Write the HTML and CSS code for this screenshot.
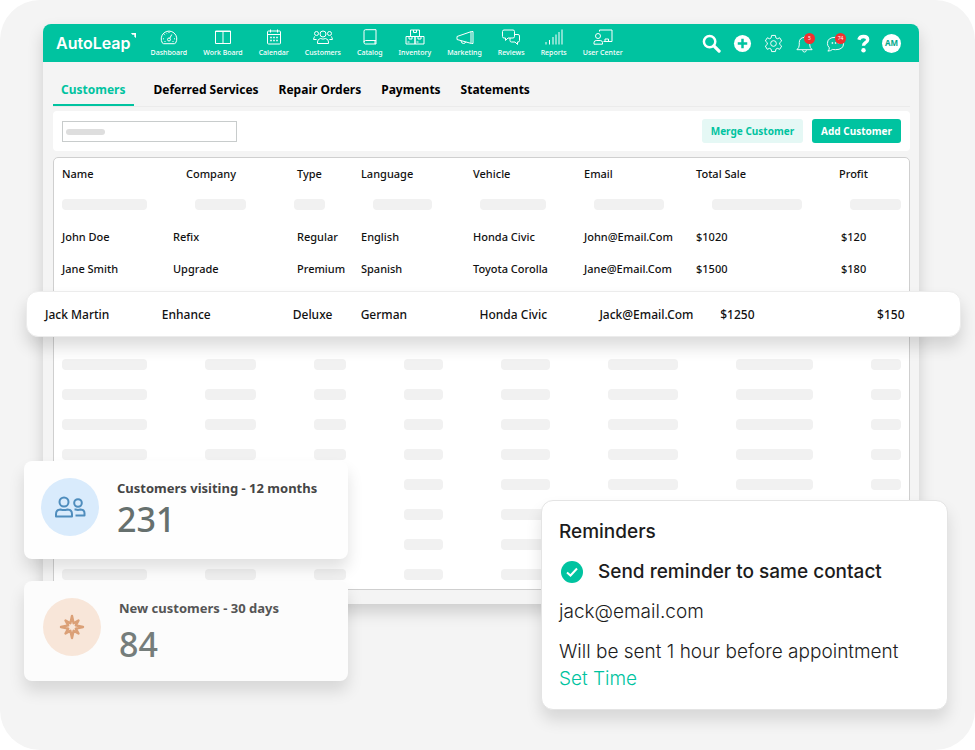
FILE: index.html
```html
<!DOCTYPE html>
<html lang="en">
<head>
  <meta charset="UTF-8">
  <meta name="viewport" content="width=device-width, initial-scale=1">
  <title>AutoLeap - Customers</title>
  <link rel="stylesheet" href="styles.css">
</head>
<body>
  <main class="stage">

    <div class="window">
      <header class="navbar">
        <a href="#" class="logo">AutoLeap<svg class="logo-mark" viewBox="0 0 6 6"><path d="M0 0h6v6L4 4.500V2H1.500z" fill="#fff"/></svg></a>

        <nav class="menu">
          <a href="#">
            <svg viewBox="0 0 20 16"><path d="M3.500 14.200A7.800 7.800 0 1 1 16.500 14.200Q16 14.700 15.300 14.700H4.700Q4 14.700 3.500 14.200z"/><circle cx="10" cy="10.500" r="1.500"/><path d="M10.800 9.200l2-3.700M10 3v1M5.400 5.400l.7.600M4 9.800h1M15 9.800h1M7.500 3.800l.3.700M5.500 12.500h1M13.500 12.500h1"/></svg>
            Dashboard
          </a>
          <a href="#">
            <svg viewBox="0 0 20 16"><path d="M2.500 2h15v12.500h-15zM10 2v12.500M2.500 2.500h15"/></svg>
            Work Board
          </a>
          <a href="#">
            <svg viewBox="0 0 20 16"><rect x="3.500" y="2" width="13" height="13" rx="1"/><path d="M3.500 5.500h13M6.500 .5v3M13.500 .5v3"/><path d="M6.200 8.500h1.600M9.200 8.500h1.600M12.200 8.500h1.600M6.200 11.500h1.600M9.200 11.500h1.600M12.200 11.500h1.600" stroke-width="1.600"/></svg>
            Calendar
          </a>
          <a href="#">
            <svg viewBox="0 0 20 16"><circle cx="10" cy="5" r="3"/><path d="M4.500 14.500v-1.500q0-3 3-3.500 2.500 1.300 5 0 3 .5 3 3.500v1.500z"/><circle cx="3.500" cy="4.500" r="2"/><circle cx="16.500" cy="4.500" r="2"/><path d="M2 7.500Q.6 8 .6 10.500h3M18 7.500q1.400.5 1.400 3h-3"/></svg>
            Customers
          </a>
          <a href="#">
            <svg viewBox="0 0 20 16"><path d="M16 11.500H5.500a1.500 1.700 0 0 0 0 3.500H16V.7H5.500Q4 .7 4 2.200v11M15 11.500V15"/></svg>
            Catalog
          </a>
          <a href="#">
            <svg viewBox="0 0 20 16"><path d="M5.500 1h9v6.500h-9zM1 7.500h9V15H1zM10 7.500h9V15h-9zM8.500 1v2.500h3V1M4 7.500V10h3V7.500M13 7.500V10h3V7.500M2.500 13h2M11.500 13h2"/></svg>
            Inventory
          </a>
          <a href="#">
            <svg viewBox="0 0 20 16"><path d="M2 7.500L16.500 2.500h1.500v12h-1.500L2 10.500zM16 2.700v11.500M6 11.800q.3 2.700 2.500 2.700 1.800 0 2.300-1.700"/></svg>
            Marketing
          </a>
          <a href="#">
            <svg viewBox="0 0 20 16"><path d="M3 1h9q1.500 0 1.500 1.500v5Q13.500 9 12 9H7l-2.500 2.500V9H3Q1.500 9 1.500 7.500v-5Q1.500 1 3 1z"/><path d="M13.500 5.500H17q1.500 0 1.500 1.500v4.500q0 1.500-1.500 1.500h-.5v2.500L14 13h-3.500Q9 13 9 11.500V9"/></svg>
            Reviews
          </a>
          <a href="#">
            <svg viewBox="0 0 20 16"><path d="M2 13v2.500M5.500 11v4.500M9 8v7.500M12 5.500v10M15 3v12.500M18 .5v15"/></svg>
            Reports
          </a>
          <a href="#">
            <svg viewBox="0 0 20 16"><path d="M6.500 2.500V1H19v11.500h-8.500M12 12.500V10h3.500v2.500"/><circle cx="5" cy="7" r="2.500"/><path d="M1 15.200v-1.500q0-2.200 2.200-2.200h4q2.300 0 2.300 2.200v1.500z"/></svg>
            User Center
          </a>
        </nav>

        <div class="actions">
          <button class="icon-button" aria-label="Search">
            <svg viewBox="0 0 20 20"><circle cx="8" cy="8" r="6" stroke-width="2.600"/><path d="M12.500 12.500l5.500 5.500" stroke-width="3.400" stroke-linecap="round"/></svg>
          </button>
          <button class="icon-button" aria-label="Add">
            <svg viewBox="0 0 20 20"><circle cx="10" cy="10" r="9" fill="#fff" stroke="none"/><path d="M10 5v10M5 10h10" stroke="#00c3a0" stroke-width="2.600"/></svg>
          </button>
          <button class="icon-button" aria-label="Settings">
            <svg viewBox="0 0 20 20"><path d="M8 1.500h4l.5 2.600 1.500.9 2.600-1 2 3.400-2.100 1.800v1.700l2.100 1.800-2 3.400-2.600-1-1.500.9-.5 2.500H8l-.5-2.500-1.500-.9-2.600 1-2-3.400 2.100-1.800V9.200L1.400 7.400l2-3.400L6 5l1.500-.9z" stroke-linejoin="round"/><circle cx="10" cy="10" r="3"/></svg>
          </button>
          <button class="icon-button" aria-label="Notifications">
            <svg viewBox="0 0 20 20"><path d="M2 16.500q2.500-2 2.500-5V9q0-5 5.500-5.500 5.500.5 5.500 5.500v2.500q0 3 2.500 5zM10 3.500V2M8 17q.3 2 2 2t2-2" stroke-linejoin="round"/></svg>
            <span class="badge">5</span>
          </button>
          <button class="icon-button" aria-label="Messages">
            <svg viewBox="0 0 20 20"><path d="M3.500 14.500Q1.500 12.500 1.500 10 1.500 3.500 10 3.500T18.500 10 10 16.500q-1.800 0-3-.3-2 1.700-5 1.800 1.700-1.800 1.500-3.500z" stroke-linejoin="round"/><path d="M6 9.500h1.500M9.300 9.500h1.500M12.500 9.500H14" stroke-width="1.500"/></svg>
            <span class="badge">74</span>
          </button>
          <button class="icon-button help" aria-label="Help">
            <svg viewBox="0 0 14 20"><path d="M2 6Q3 2.500 7 2.500q4.500 0 4.500 3.500 0 1.800-2.500 3.200-2 1.100-2 3.300" stroke-width="3.600"/><circle cx="7" cy="17.200" r="2.400" fill="#fff" stroke="none"/></svg>
          </button>
          <button class="avatar">AM</button>
        </div>
      </header>

      <section class="content">
        <nav class="tabs">
          <a href="#" class="active">Customers</a>
          <a href="#">Deferred Services</a>
          <a href="#">Repair Orders</a>
          <a href="#">Payments</a>
          <a href="#">Statements</a>
        </nav>

        <div class="toolbar">
          <div class="search">
            <input type="text" aria-label="Search customers">
            <span class="search-hint"></span>
          </div>
          <button class="btn btn-light">Merge Customer</button>
          <button class="btn btn-primary">Add Customer</button>
        </div>

        <table class="customers">
          <thead>
            <tr class="head">
              <th>Name</th><th>Company</th><th>Type</th><th>Language</th><th>Vehicle</th><th>Email</th><th>Total Sale</th><th>Profit</th>
            </tr>
          </thead>
          <tbody>
            <tr class="loading-top"><td></td><td></td><td></td><td></td><td></td><td></td><td></td><td></td></tr>
            <tr class="person">
              <td>John Doe</td><td>Refix</td><td>Regular</td><td>English</td><td>Honda Civic</td><td>John@Email.Com</td><td>$1020</td><td>$120</td>
            </tr>
            <tr class="person">
              <td>Jane Smith</td><td>Upgrade</td><td>Premium</td><td>Spanish</td><td>Toyota Corolla</td><td>Jane@Email.Com</td><td>$1500</td><td>$180</td>
            </tr>
            <tr class="selected">
              <td>Jack Martin</td><td>Enhance</td><td>Deluxe</td><td>German</td><td>Honda Civic</td><td>Jack@Email.Com</td><td>$1250</td><td>$150</td>
            </tr>
            <tr class="loading"><td></td><td></td><td></td><td></td><td></td><td></td><td></td><td></td></tr>
            <tr class="loading"><td></td><td></td><td></td><td></td><td></td><td></td><td></td><td></td></tr>
            <tr class="loading"><td></td><td></td><td></td><td></td><td></td><td></td><td></td><td></td></tr>
            <tr class="loading"><td></td><td></td><td></td><td></td><td></td><td></td><td></td><td></td></tr>
            <tr class="loading"><td></td><td></td><td></td><td></td><td></td><td></td><td></td><td></td></tr>
            <tr class="loading"><td></td><td></td><td></td><td></td><td></td><td></td><td></td><td></td></tr>
            <tr class="loading"><td></td><td></td><td></td><td></td><td></td><td></td><td></td><td></td></tr>
            <tr class="loading"><td></td><td></td><td></td><td></td><td></td><td></td><td></td><td></td></tr>
          </tbody>
        </table>
      </section>
    </div>

    <!-- Floating stats -->
    <aside class="stats">
      <div class="stat">
        <div class="stat-icon blue">
          <svg viewBox="0 0 32 24"><circle cx="10" cy="7" r="4.500"/><path d="M2 21.500v-2.300Q2 14.500 6.500 14.500q3.500 1.200 7 0 4.500 0 4.500 4.700v2.300z" stroke-linejoin="round"/><circle cx="24" cy="8" r="3.800"/><path d="M20.500 14.500h1q2.500.8 5 0 4 0 4 3.800v2.200h-9" stroke-linejoin="round"/></svg>
        </div>
        <div>
          <h3>Customers visiting - 12 months</h3>
          <p>231</p>
        </div>
      </div>
      <div class="stat stat-new">
        <div class="stat-icon orange">
          <svg viewBox="0 0 26 26"><path d="M13 2l1.600 7.200 4.900-2.700-2.700 4.900L24 13l-7.200 1.600 2.700 4.900-4.900-2.700L13 24l-1.600-7.200-4.900 2.700 2.700-4.900L2 13l7.200-1.600-2.700-4.900 4.900 2.700z" stroke-linejoin="round"/></svg>
        </div>
        <div>
          <h3>New customers - 30 days</h3>
          <p>84</p>
        </div>
      </div>
    </aside>

    <!-- Reminder card -->
    <aside class="reminders">
      <h2>Reminders</h2>
      <label class="check">
        <input type="checkbox" checked>
        <svg viewBox="0 0 22 22"><path d="M6 11.500l3.500 3 6.500-7"/></svg>
        Send reminder to same contact
      </label>
      <p class="email">jack@email.com</p>
      <p>Will be sent 1 hour before appointment</p>
      <a href="#">Set Time</a>
    </aside>

  </main>
</body>
</html>
```

FILE: styles.css
```css
* {
  box-sizing: border-box;
}

body {
  margin: 0;
  background: #fff;
  font-family: "Noto Sans", "Open Sans", sans-serif;
  color: #111;
}

a {
  color: inherit;
  text-decoration: none;
}

button {
  border: none;
  padding: 0;
  font-family: inherit;
  cursor: pointer;
}

h2, h3, p {
  margin: 0;
}

.stage {
  position: relative;
  min-height: 750px;
  padding: 24px 56px 24px 43px;
  background: #f4f4f4;
  border-radius: 40px;
  overflow: hidden;
}

.window {
  background: #f4f4f4;
  border-radius: 8px;
  box-shadow: 0 8px 16px rgba(0, 0, 0, 0.16);
}

/* Top bar */
.navbar {
  display: flex;
  align-items: center;
  height: 38px;
  padding: 0 18px 0 13px;
  background: #00c3a0;
  color: #fff;
  border-radius: 8px 8px 0 0;
}

.logo {
  display: flex;
  font-family: Inter, sans-serif;
  font-size: 16px;
  font-weight: 600;
  line-height: 20px;
  margin-right: 15px;
}

.logo-mark {
  width: 5px;
  height: 5px;
}

.menu {
  display: flex;
  gap: 16px;
}

.menu a {
  display: flex;
  flex-direction: column;
  align-items: center;
  gap: 3px;
  font-size: 7px;
  font-weight: 500;
  line-height: 10px;
  white-space: nowrap;
}

.menu svg {
  width: 20px;
  height: 16px;
}

.navbar svg {
  display: block;
  fill: none;
  stroke: #fff;
  stroke-width: 1;
}

.navbar .logo-mark {
  stroke: none;
}

.actions {
  display: flex;
  align-items: center;
  gap: 12px;
  margin-left: auto;
}

.icon-button {
  position: relative;
  width: 19px;
  height: 19px;
  background: none;
}

.icon-button svg {
  width: 100%;
  height: 100%;
}

.help {
  width: 13px;
}

.badge {
  position: absolute;
  top: -1px;
  right: -1px;
  width: 11px;
  height: 11px;
  border-radius: 50%;
  background: #f03030;
  color: #fff;
  font-size: 5px;
  line-height: 10px;
  text-align: center;
}

.avatar {
  width: 19px;
  height: 19px;
  border-radius: 50%;
  background: #fff;
  color: #00a98b;
  font-size: 8px;
  font-weight: 700;
  line-height: 16px;
}

/* Page content */
.content {
  padding: 0 9px 14px 10px;
}

.tabs {
  display: flex;
  gap: 20px;
  height: 45px;
  border-bottom: 1px solid #ebebeb;
  font-size: 12px;
  font-weight: 700;
  color: #000;
}

.tabs a {
  height: 44px;
  padding-top: 19px;
  line-height: 18px;
  white-space: nowrap;
}

.tabs .active {
  padding: 19px 8px 0;
  border-bottom: 2px solid #00c3a0;
  color: #00c3a0;
}

.toolbar {
  display: flex;
  align-items: center;
  gap: 9px;
  height: 40px;
  margin: 4px 0 6px;
  padding: 0 9px;
  background: #fff;
  border-radius: 4px;
}

.search {
  position: relative;
  margin-right: auto;
}

.search input {
  display: block;
  width: 175px;
  height: 21px;
  border: 1px solid #c8cccc;
  padding: 0 6px;
}

.search-hint {
  position: absolute;
  top: 8px;
  left: 4px;
  width: 39px;
  height: 6px;
  border-radius: 3px;
  background: #dedede;
}

.btn {
  height: 24px;
  padding: 0 9px;
  border-radius: 3px;
  font-size: 10px;
  font-weight: 700;
}

.btn-light {
  background: #e5f8f5;
  color: #00c3a0;
}

.btn-primary {
  background: #00c3a0;
  color: #fff;
}

/* Customers table */
.customers {
  display: block;
  background: #fff;
  border: 1px solid #cfcfcf;
  border-radius: 5px;
  font-size: 11px;
  font-weight: 500;
}

.customers thead,
.customers tbody {
  display: block;
}

.customers tr {
  display: grid;
  align-items: center;
  padding: 0 8px;
  white-space: nowrap;
}

.customers th,
.customers td {
  padding: 0;
  font-weight: inherit;
  text-align: left;
}

.customers .head {
  height: 31px;
  grid-template-columns: 124fr 111fr 64fr 112fr 111fr 112fr 143fr 62fr;
}

.customers .person {
  height: 32px;
  grid-template-columns: 111fr 124fr 64fr 112fr 111fr 112fr 145fr 60fr;
}

.customers .selected {
  position: relative;
  height: 46px;
  margin: 7px -52px 12px -28px;
  padding: 0 18px;
  grid-template-columns: 117fr 131fr 68fr 119fr 120fr 121fr 157fr 65fr;
  background: #fff;
  border: 1px solid #ececec;
  border-radius: 12px;
  box-shadow: 0 10px 16px rgba(0, 0, 0, 0.14);
  font-size: 12px;
}

/* Placeholder rows */
.loading-top td,
.loading td {
  height: 11px;
  border-radius: 4px;
  background: #f1f1f1;
}

.customers .loading-top {
  height: 31px;
  grid-template-columns: 85fr 50fr 31fr 59fr 66fr 70fr 89fr 51fr;
  column-gap: 48px;
}

.customers .loading {
  height: 30px;
  grid-template-columns: 85fr 50fr 32fr 39fr 49fr 69fr 77fr 30fr;
  column-gap: 58px;
}

/* Floating stats */
.stats {
  position: absolute;
  top: 461px;
  left: 24px;
  display: flex;
  flex-direction: column;
  gap: 22px;
  width: 324px;
}

.stat {
  display: flex;
  gap: 18px;
  height: 98px;
  padding: 17px;
  background: #fefefe;
  border-radius: 8px;
  box-shadow: 0 10px 16px rgba(0, 0, 0, 0.12);
}

.stat-new {
  height: 100px;
  padding: 17px 19px;
  background: #fcfcfc;
}

.stat-icon {
  display: flex;
  align-items: center;
  justify-content: center;
  width: 58px;
  height: 58px;
  border-radius: 50%;
}

.stat-icon svg {
  fill: none;
  stroke-width: 2;
}

.blue {
  background: #d9ebfc;
}

.blue svg {
  width: 32px;
  height: 24px;
  stroke: #4f8dbd;
}

.orange {
  background: #f8e6d9;
}

.orange svg {
  width: 26px;
  height: 26px;
  stroke: #dba077;
  stroke-width: 2.4;
}

.stat h3 {
  font-size: 13px;
  font-weight: 700;
  line-height: 20px;
  color: #454545;
}

.stat p {
  font-size: 34px;
  font-weight: 500;
  line-height: 42px;
  color: #66706e;
}

.stat-new h3 {
  color: #555;
}

.stat-new p {
  margin-top: 5px;
  color: #757d7b;
}

/* Reminder card */
.reminders {
  position: absolute;
  top: 500px;
  right: 27px;
  width: 407px;
  padding: 17px;
  background: #fff;
  border: 1px solid #e4e4e4;
  border-radius: 12px;
  box-shadow: 0 10px 16px rgba(0, 0, 0, 0.12);
  font-family: Inter, sans-serif;
  font-size: 19px;
  font-weight: 300;
  line-height: 27px;
  color: #1c1c1c;
}

.reminders h2 {
  font-size: 19px;
  font-weight: 500;
}

.check {
  position: relative;
  display: flex;
  align-items: center;
  gap: 15px;
  margin: 13px 0;
  font-weight: 500;
}

.check input {
  appearance: none;
  width: 22px;
  height: 22px;
  margin: 0 0 0 2px;
  border-radius: 50%;
  background: #00c3a0;
}

.check svg {
  position: absolute;
  left: 2px;
  width: 22px;
  height: 22px;
  fill: none;
  stroke: #fff;
  stroke-width: 2;
  pointer-events: none;
}

.email {
  margin-bottom: 13px;
}

.reminders a {
  color: #00c3a0;
}
```
